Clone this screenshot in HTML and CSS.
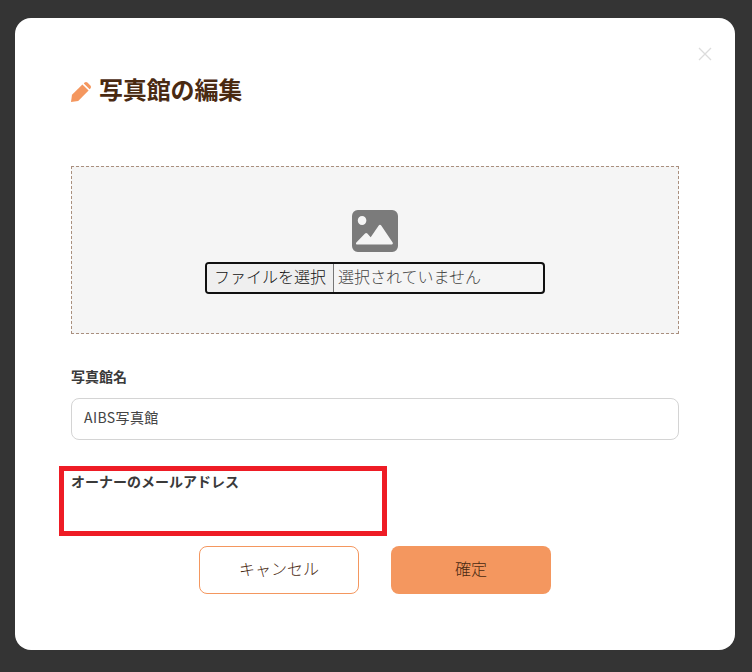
FILE: index.html
```html
<!DOCTYPE html>
<html lang="ja">
<head>
<meta charset="utf-8">
<title>写真館の編集</title>
<link rel="stylesheet" href="styles.css">
</head>
<body>
<div class="modal">
  <button class="close" aria-label="閉じる">
    <svg viewBox="0 0 14 14" width="14" height="14"><path d="M1 1L13 13M13 1L1 13" stroke="#dcdcdc" stroke-width="1.3" fill="none"/></svg>
  </button>
  <h1 class="title">
    <svg class="pencil" viewBox="0 0 20 20" width="20" height="20"><path d="M0 20L1 12.800L11.400 2.400L17.600 8.600L7.200 19Z" fill="#f4975f"/><path d="M12.800 1.400L13.600 .6C14.400 -.2 15.600 -.2 16.400 .6L19.400 3.600C20.200 4.400 20.200 5.600 19.400 6.400L18.600 7.200Z" fill="#f4975f"/></svg>
    <span>写真館の編集</span>
  </h1>
  <div class="drop">
    <svg class="photo" viewBox="0 0 48 42" width="46" height="42" preserveAspectRatio="none"><path fill-rule="evenodd" d="M6 0H42A6 6 0 0 1 48 6V36A6 6 0 0 1 42 42H6A6 6 0 0 1 0 36V6A6 6 0 0 1 6 0ZM10.500 6A4.500 4.500 0 1 0 10.501 15A4.500 4.500 0 1 0 10.500 6ZM5 34.500H41.500C42.500 34.500 43 33.500 42.400 32.600L30.500 15.500C29.800 14.500 28.600 14.500 27.900 15.500L19.500 27.300L16 23.500C15.300 22.800 14.300 22.800 13.600 23.500L4.500 32.500C3.800 33.300 4 34.500 5 34.500Z" fill="#7b7b7b"/></svg>
    <div class="file">
      <span class="file-btn">ファイルを選択</span>
      <span class="file-name">選択されていません</span>
    </div>
  </div>
  <label class="label first">写真館名</label>
  <div class="input">AIBS写真館</div>
  <label class="label second">オーナーのメールアドレス</label>
  <div class="actions">
    <button class="btn ghost">キャンセル</button>
    <button class="btn solid">確定</button>
  </div>
  <div class="highlight"></div>
</div>
</body>
</html>
```
FILE: styles.css
```css
* { box-sizing: border-box; }
html, body { margin: 0; height: 100%; }
body {
  background: #343434;
  padding: 18px 17px 22px 15px;
  overflow: hidden;
  font-family: "Noto Sans CJK JP", "Noto Sans", sans-serif;
  color: #333;
}
.modal {
  position: relative;
  height: 632px;
  background: #fff;
  border-radius: 16px;
  padding: 53px 56px 0;
}
.close {
  position: absolute;
  top: 29px;
  right: 23px;
  width: 14px;
  height: 14px;
  padding: 0;
  border: 0;
  background: none;
  line-height: 0;
}
.title {
  display: flex;
  align-items: center;
  gap: 8px;
  height: 36px;
  margin: 0;
  font-size: 24px;
  line-height: 36px;
  font-weight: 700;
  color: #4a2a12;
  letter-spacing: -.15px;
}
.pencil { margin-top: 5px; }
.drop {
  height: 168px;
  margin-top: 59px;
  background: #f5f5f5;
  border: 1px dashed #a98f7e;
  display: flex;
  flex-direction: column;
  align-items: center;
  padding-top: 43px;
}
.photo { display: block; }
.file {
  width: 340px;
  height: 32px;
  margin-top: 10px;
  border: 2px solid #101010;
  border-radius: 4px;
  display: flex;
  align-items: center;
  font-size: 16px;
  line-height: 24px;
  font-weight: 300;
}
.file-btn {
  height: 100%;
  padding: 0 6px 0 7px;
  background: #efefef;
  border-right: 1px solid #767676;
  border-radius: 2px 0 0 2px;
  color: #111;
  width: 127px;
}
.file-name { padding: 0 0 4px 4px; color: #444; }
.label {
  display: block;
  font-size: 14px;
  line-height: 20px;
  font-weight: 700;
  color: #3a3a3a;
}
.first { margin-top: 32px; }
.input {
  height: 42px;
  margin-top: 12px;
  padding: 0 12px;
  border: 1px solid #d4d4d4;
  border-radius: 8px;
  font-size: 14px;
  line-height: 36px;
  color: #444;
  letter-spacing: .4px;
}
.second { margin-top: 31px; }
.actions {
  display: flex;
  justify-content: center;
  gap: 32px;
  margin-top: 55px;
}
.btn {
  width: 160px;
  height: 48px;
  border-radius: 8px;
  font-family: inherit;
  font-size: 16px;
  font-weight: 300;
  color: #4a2a12;
  padding: 0 0 4px;
}
.ghost { background: #fff; border: 1px solid #f4975f; }
.solid { background: #f4975f; border: 0; }
.highlight {
  position: absolute;
  left: 44px;
  top: 448px;
  width: 328px;
  height: 70px;
  border: 5px solid #ee1c25;
}
```
